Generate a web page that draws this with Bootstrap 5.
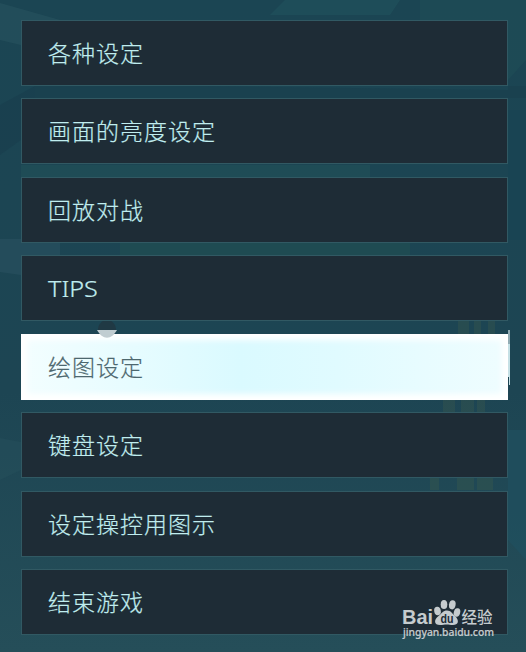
<!DOCTYPE html>
<html lang="zh-CN">
<head>
  <meta charset="UTF-8" />
  <meta name="viewport" content="width=device-width, initial-scale=1" />
  <title>设定</title>
  <link href="https://cdn.jsdelivr.net/npm/bootstrap@5.3.2/dist/css/bootstrap.min.css" rel="stylesheet" />
  <style>
    body {
      height: 652px;
      overflow: hidden;
      background: #1e4654;
      font-family: "Noto Sans CJK SC", sans-serif;
    }
    .scene { z-index: -1; }
    .menu {
      width: 487px;
      margin-left: 21px;
      padding-top: 20px;
      gap: 12.45px;
    }
    .menu-item {
      height: 66px;
      padding: 0 0 1px 26px;
      border: 1px solid #315963;
      border-radius: 0;
      background: #1e2c36;
      color: #c0edef;
      font-size: 23px;
      font-weight: 300;
      letter-spacing: 1px;
      line-height: 1;
      -webkit-text-stroke: .2px;
    }
    .menu-item:hover { color: #c0edef; }
    .menu-item.selected {
      color: #4d676e;
      border-color: #fff;
      background: linear-gradient(90deg, #f3feff, #dafaff 45%, #e0fbff 65%, #effdff);
      box-shadow: inset 0 0 6px 5px #fff;
    }
    .latin {
      padding-top: 3px;
      font-family: "Noto Sans", sans-serif;
      font-size: 22.5px;
      letter-spacing: 0;
      transform: scaleX(1.12);
      transform-origin: left;
    }
    .pointer-dot { left: 97px; top: 330px; }
    .edge-line { left: 508px; top: 330px; }
    .watermark { left: 396px; top: 590px; }
  </style>
</head>
<body>
  <!-- Fondo -->
  <svg class="scene position-absolute top-0 start-0" width="526" height="652">
    <defs>
      <linearGradient id="sea" x1="0" y1="0" x2="0" y2="1">
        <stop offset="0" stop-color="#1b4553" />
        <stop offset=".6" stop-color="#1d4553" />
        <stop offset="1" stop-color="#254e59" />
      </linearGradient>
    </defs>
    <rect width="526" height="652" fill="url(#sea)" />
    <path d="M0 3L60 20H21V45L0 40Z" fill="#28545f" opacity=".6" />
    <path d="M285 0H400L390 15H270Z" fill="#22535d" opacity=".6" />
    <path d="M420 0H526V60L508 80V20H420Z" fill="#204f56" opacity=".6" />
    <path d="M0 105L35 86V98H21V140L0 155Z" fill="#173b4b" opacity=".5" />
    <path d="M35 86H205L508 90V86H526V98H35Z" fill="#193c4c" opacity=".4" />
    <path d="M21 165H370V177H21Z" fill="#225158" opacity=".6" />
    <path d="M0 239H60V255H21V275L0 272Z" fill="#2a5260" opacity=".6" />
    <path d="M120 243H410V255H120Z" fill="#204c52" opacity=".8" />
    <path d="M508 110H526V240H508Z" fill="#194354" opacity=".8" />
    <path d="M0 438L21 442V470L0 480Z" fill="#25505b" opacity=".5" />
    <path d="M508 430H526V560L508 540Z" fill="#20505f" opacity=".7" />
    <g fill="#4c6548" opacity=".24">
      <path d="M458 321h11v13h-11zM474 321h7v13h-7zM488 321h7v13h-7z" />
      <path d="M443 400h12v12h-12zM461 400h13v12h-13zM477 400h8v12h-8z" />
      <path d="M430 478h9v12h-9zM457 478h17v12h-17zM477 478h16v12h-16z" />
    </g>
    <path d="M98 330C98 325 101 321 107 319C113 321 116 325 116 330Z" fill="#203944" />
  </svg>

  <!-- Menú -->
  <nav class="menu d-flex flex-column">
    <a class="menu-item btn d-flex align-items-center">各种设定</a>
    <a class="menu-item btn d-flex align-items-center">画面的亮度设定</a>
    <a class="menu-item btn d-flex align-items-center">回放对战</a>
    <a class="menu-item btn d-flex align-items-center"><span class="latin">TIPS</span></a>
    <a class="menu-item btn d-flex align-items-center selected">绘图设定</a>
    <a class="menu-item btn d-flex align-items-center">键盘设定</a>
    <a class="menu-item btn d-flex align-items-center">设定操控用图示</a>
    <a class="menu-item btn d-flex align-items-center">结束游戏</a>
  </nav>

  <svg class="pointer-dot position-absolute" width="20" height="8">
    <path d="M0 0H20C17 5 14 7.7 10 7.7S3 5 0 0Z" fill="#c0cdd1" />
  </svg>
  <svg class="edge-line position-absolute" width="2" height="55">
    <path d="M0 0H2V14H0Z" fill="#91abb3" />
    <path d="M0 14H2V47H0Z" fill="#c5e0e5" />
    <path d="M1 47H2V55H1Z" fill="#c5e0e5" />
  </svg>

  <!-- Marca de agua -->
  <svg class="watermark position-absolute" width="110" height="55" fill="#c5cbce">
    <text x="6" y="34" font-family="Liberation Sans, sans-serif" font-size="21" font-weight="700" textLength="31" lengthAdjust="spacingAndGlyphs">Bai</text>
    <ellipse cx="41.5" cy="21" rx="3.3" ry="4.3" transform="rotate(-10 41.5 21)" />
    <ellipse cx="48" cy="14.5" rx="3.3" ry="4.6" />
    <ellipse cx="56.3" cy="14.8" rx="3.3" ry="4.6" transform="rotate(10 56.3 14.8)" />
    <ellipse cx="61" cy="22.5" rx="3.2" ry="4.3" transform="rotate(15 61 22.5)" />
    <path d="M51 20.5C55 20.5 56 23.5 59 26C64 31 62 35 57 35C54 35 53 34.5 51 34.5C48 34.5 47 35 44 35C38 35 37.5 30 42.5 26C46 23 47 20.5 51 20.5Z" />
    <text x="44.5" y="32.5" fill="#1e2c36" font-family="Liberation Sans, sans-serif" font-size="12.5" font-weight="700" textLength="13" lengthAdjust="spacingAndGlyphs">du</text>
    <text x="65.5" y="33" font-family="Noto Sans CJK SC, sans-serif" font-size="16" font-weight="500" textLength="31" lengthAdjust="spacingAndGlyphs">经验</text>
    <text x="7" y="46" font-family="Noto Sans, sans-serif" font-size="10.5" font-weight="500" stroke="#c5cbce" stroke-width=".2" textLength="91" lengthAdjust="spacingAndGlyphs">jingyan.baidu.com</text>
  </svg>

  <script src="https://cdn.jsdelivr.net/npm/bootstrap@5.3.2/dist/js/bootstrap.bundle.min.js"></script>
</body>
</html>
